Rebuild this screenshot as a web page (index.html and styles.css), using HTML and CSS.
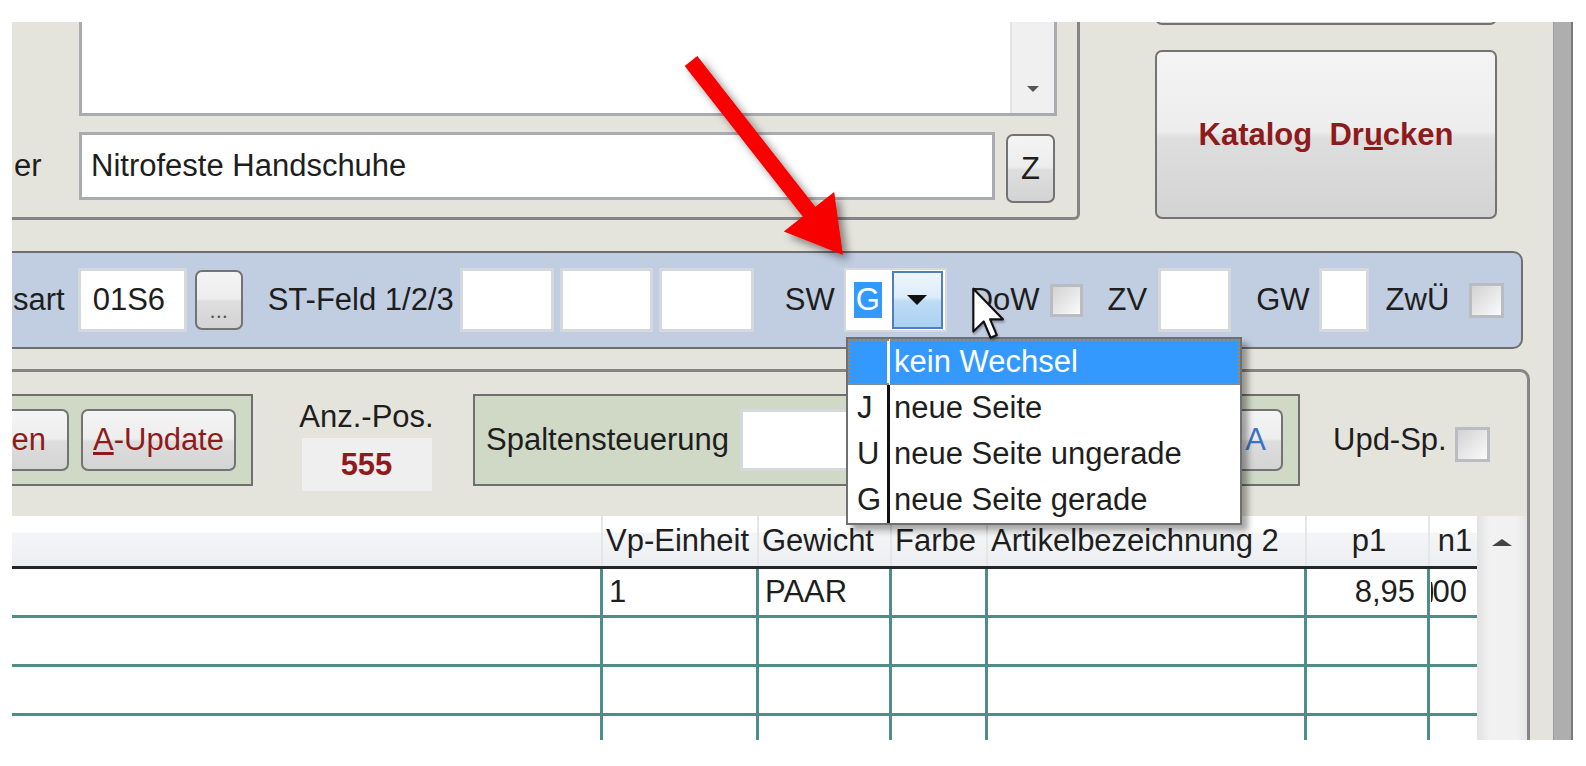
FILE: index.html
```html
<!DOCTYPE html>
<html lang="de">
  <head>
    <meta charset="UTF-8" />
    <title>Katalog</title>
    <link rel="stylesheet" href="styles.css">
  </head>
  <body>
    <div class="screen">
      <div class="main">
        <!-- Kopfbereich: Memo, Bezeichnung, Druckknopf -->
        <div class="top">
          <div class="group-top">
            <div class="memo">
              <div class="memo-scroll"><span class="tri-small"></span></div>
            </div>
            <div class="name-row">
              <span class="lbl lbl-er">er</span>
              <div class="textbox name-box">Nitrofeste Handschuhe</div>
              <button class="btn btn-z">Z</button>
            </div>
          </div>
          <div class="side">
            <div class="btn btn-cut"></div>
            <button class="btn btn-print">Katalog  Dr<u>u</u>cken</button>
          </div>
        </div>

        <!-- Blaue Leiste -->
        <div class="toolbar">
          <span class="lbl lbl-sart">sart</span>
          <div class="field f-art">01S6</div>
          <button class="btn btn-dots">...</button>
          <span class="lbl lbl-st">ST-Feld 1/2/3</span>
          <div class="field f-st1"></div>
          <div class="field f-st2"></div>
          <div class="field f-st3"></div>
          <span class="lbl lbl-sw">SW</span>
          <div class="combo">
            <span class="combo-sel">G</span>
            <span class="combo-btn"><span class="tri-down"></span></span>
          </div>
          <span class="lbl lbl-dow">DoW</span>
          <span class="check check-dow"></span>
          <span class="lbl lbl-zv">ZV</span>
          <div class="field f-zv"></div>
          <span class="lbl lbl-gw">GW</span>
          <div class="field f-gw"></div>
          <span class="lbl lbl-zwu">ZwÜ</span>
          <span class="check check-zwu"></span>
        </div>

        <!-- Unterer Bereich mit Tabelle -->
        <div class="group2">
          <div class="controls">
            <div class="panel-green panel-left">
              <button class="btn btn-en">en</button>
              <button class="btn btn-update"><u>A</u>-Update</button>
            </div>
            <div class="anz">
              <span class="lbl">Anz.-Pos.</span>
              <div class="anz-box">555</div>
            </div>
            <div class="panel-green panel-spalten">
              <span class="lbl">Spaltensteuerung</span>
              <div class="field f-spalten"></div>
              <button class="btn btn-a">A</button>
            </div>
            <div class="upd">
              <span class="lbl">Upd-Sp.</span>
              <span class="check check-upd"></span>
            </div>
          </div>

          <div class="grid">
            <div class="table">
              <div class="row head">
                <div class="cell"></div>
                <div class="cell">Vp-Einheit</div>
                <div class="cell">Gewicht</div>
                <div class="cell">Farbe</div>
                <div class="cell">Artikelbezeichnung 2</div>
                <div class="cell center">p1</div>
                <div class="cell center">n1</div>
              </div>
              <div class="row data">
                <div class="cell"></div>
                <div class="cell">1</div>
                <div class="cell">PAAR</div>
                <div class="cell"></div>
                <div class="cell"></div>
                <div class="cell num">8,95</div>
                <div class="cell num num-n1">00</div>
              </div>
              <div class="row data">
                <div class="cell"></div><div class="cell"></div><div class="cell"></div><div class="cell"></div><div class="cell"></div><div class="cell"></div><div class="cell"></div>
              </div>
              <div class="row data">
                <div class="cell"></div><div class="cell"></div><div class="cell"></div><div class="cell"></div><div class="cell"></div><div class="cell"></div><div class="cell"></div>
              </div>
              <div class="row data">
                <div class="cell"></div><div class="cell"></div><div class="cell"></div><div class="cell"></div><div class="cell"></div><div class="cell"></div><div class="cell"></div>
              </div>
            </div>
            <div class="vscroll"><span class="tri-up"></span></div>
          </div>
        </div>

        <!-- Aufgeklappte Auswahlliste SW -->
        <div class="popup">
          <div class="opt sel"><span class="opt-code"></span><span class="opt-text">kein Wechsel</span></div>
          <div class="opt"><span class="opt-code">J</span><span class="opt-text">neue Seite</span></div>
          <div class="opt"><span class="opt-code">U</span><span class="opt-text">neue Seite ungerade</span></div>
          <div class="opt"><span class="opt-code">G</span><span class="opt-text">neue Seite gerade</span></div>
        </div>

        <!-- roter Pfeil -->
        <svg class="arrow" width="900" height="260" viewBox="0 0 900 260">
          <defs>
            <filter id="shadow" x="-20%" y="-20%" width="150%" height="150%">
              <feDropShadow dx="5" dy="5" stdDeviation="4" flood-color="#000" flood-opacity="0.45" />
            </filter>
          </defs>
          <polygon filter="url(#shadow)" fill="#f80000"
            points="685.3,34.1 803.3,184.8 822.2,169.9 831,233 771.8,209.5 790.7,194.6 672.7,43.9" />
        </svg>

        <!-- Mauszeiger -->
        <svg class="cursor" width="32" height="54" viewBox="0 0 12 20">
          <path d="M0.5 0.5 V16.6 L4.4 12.8 L7 18.9 L9.3 17.9 L6.8 12 H11.6 Z"
            fill="#fff" stroke="#111" stroke-width="0.8" stroke-linejoin="round" />
        </svg>
      </div>
      <div class="edge"><div class="edge-bar"></div></div>
    </div>
  </body>
</html>
```

FILE: styles.css
```css
/* Basic Reset */
* {
  margin: 0;
  padding: 0;
  box-sizing: border-box;
}

body {
  background: #fff;
  font-family: "Liberation Sans", Arial, sans-serif;
  font-size: 31px;
  color: #1e1e1e;
}

/* Window */
.screen {
  margin: 22px 0 0 12px;
  width: 1561px;
  height: 718px;
  display: flex;
  overflow: hidden;
  background: #e5e4dc;
}

.main {
  position: relative;
  width: 1518px;
  flex: none;
}

.edge {
  flex: 1;
  display: flex;
  justify-content: flex-end;
}

.edge-bar {
  width: 20px;
  background: #aeaeae;
  border-left: 1px solid #9c9c9c;
  border-right: 2px solid #7a7a7a;
}

.lbl {
  white-space: nowrap;
  line-height: 36px;
}

/* Buttons */
.btn {
  font: inherit;
  color: #1e1e1e;
  border: 2px solid #737373;
  border-radius: 7px;
  background: linear-gradient(#f4f4f4 0%, #ededed 48%, #dedede 52%, #d3d3d3 100%);
  flex: none;
}

.textbox,
.field {
  background: #fff;
  flex: none;
}

/* Top area */
.top {
  display: flex;
  align-items: flex-start;
  height: 198px;
}

.group-top {
  width: 1068px;
  height: 198px;
  border-right: 3px solid #858585;
  border-bottom: 3px solid #858585;
  border-bottom-right-radius: 6px;
}

.memo {
  margin-left: 67px;
  width: 978px;
  height: 94px;
  background: #fff;
  border: 3px solid #a8acb1;
  border-top: none;
  display: flex;
  justify-content: flex-end;
}

.memo-scroll {
  width: 44px;
  background: #f0f0f0;
  border-left: 2px solid #e3e3e3;
  display: flex;
  align-items: flex-end;
  justify-content: center;
  padding-bottom: 21px;
}

.tri-small {
  border-left: 6px solid transparent;
  border-right: 6px solid transparent;
  border-top: 6px solid #555;
}

.name-row {
  display: flex;
  align-items: center;
  margin-top: 12px;
}

.lbl-er {
  width: 67px;
  padding-left: 2px;
}

.name-box {
  width: 916px;
  height: 68px;
  border: 3px solid #a8acb1;
  padding-left: 9px;
  display: flex;
  align-items: center;
}

.btn-z {
  margin-left: 11px;
  margin-top: 6px;
  width: 49px;
  height: 69px;
}

.side {
  margin-left: 75px;
  width: 342px;
  display: flex;
  flex-direction: column;
}

.btn-cut {
  height: 25px;
  margin-top: -22px;
}

.btn-print {
  margin-top: 25px;
  height: 169px;
  font-weight: bold;
  color: #8e1b1b;
  white-space: pre;
}

/* Blue bar */
.toolbar {
  margin-top: 31px;
  width: 1511px;
  height: 98px;
  background: #c1cde0;
  border: 2px solid #6f6f6f;
  border-left: none;
  border-radius: 0 10px 10px 0;
  display: flex;
  align-items: center;
}

.toolbar .field {
  height: 64px;
  border: 3px solid #d5d9de;
  display: flex;
  align-items: center;
  padding-left: 12px;
}

.lbl-sart { margin-left: 1px; }
.f-art { margin-left: 13px; width: 109px; }
.btn-dots {
  margin-left: 8px;
  width: 48px;
  height: 60px;
  font-size: 22px;
  color: #555;
  padding-top: 22px;
}
.lbl-st { margin-left: 25px; }
.f-st1 { margin-left: 6px; width: 94px; }
.f-st2 { margin-left: 6px; width: 93px; }
.f-st3 { margin-left: 6px; width: 95px; }
.lbl-sw { margin-left: 31px; }

.combo {
  margin-left: 9px;
  width: 103px;
  height: 64px;
  background: #fff;
  border: 2px solid #d5d9de;
  display: flex;
  align-items: center;
  padding-left: 8px;
}

.combo-sel {
  width: 28px;
  height: 36px;
  background: #3399ff;
  color: #fff;
  display: flex;
  align-items: center;
  justify-content: center;
}

.combo-btn {
  margin-left: 10px;
  width: 51px;
  height: 58px;
  border: 2px solid #4f80bd;
  background: linear-gradient(#eef5fc 0%, #dcecfa 45%, #bfdcf5 52%, #aad1f2 100%);
  display: flex;
  align-items: center;
  justify-content: center;
}

.tri-down {
  border-left: 10px solid transparent;
  border-right: 10px solid transparent;
  border-top: 10px solid #111;
}

.check {
  flex: none;
  width: 33px;
  height: 33px;
  border: 3px solid #b9bdc2;
  background: linear-gradient(135deg, #d2d2d2, #fbfbfb);
}

.lbl-dow { margin-left: 24px; }
.check-dow { margin-left: 10px; }
.lbl-zv { margin-left: 25px; }
.f-zv { margin-left: 11px; width: 73px; }
.lbl-gw { margin-left: 25px; }
.f-gw { margin-left: 9px; width: 50px; }
.lbl-zwu { margin-left: 17px; }
.check-zwu { margin-left: 20px; width: 35px; height: 35px; }

/* Lower group */
.group2 {
  margin-top: 20px;
  height: 371px;
  border-top: 3px solid #858585;
  border-right: 3px solid #858585;
  border-top-right-radius: 10px;
}

.controls {
  display: flex;
  align-items: flex-start;
  height: 114px;
  padding-top: 22px;
}

.panel-green {
  height: 92px;
  background: #d0d8c6;
  border: 2px solid #6f6f6f;
  display: flex;
  align-items: center;
  flex: none;
}

.panel-left {
  margin-left: -40px;
  width: 281px;
  padding-left: 18px;
  gap: 12px;
}

.btn-en {
  width: 77px;
  height: 62px;
  text-align: right;
  padding-right: 21px;
  color: #8e1b1b;
}

.btn-update {
  width: 155px;
  height: 62px;
  color: #8e1b1b;
}

.anz {
  margin-left: 43px;
  margin-top: 5px;
  width: 141px;
  display: flex;
  flex-direction: column;
  align-items: center;
}

.anz-box {
  margin-top: 3px;
  width: 130px;
  height: 53px;
  background: #efefef;
  color: #8e1b1b;
  font-weight: bold;
  display: flex;
  align-items: center;
  justify-content: center;
}

.panel-spalten {
  margin-left: 36px;
  width: 827px;
  padding-left: 11px;
}

.f-spalten {
  margin-left: 11px;
  width: 150px;
  height: 62px;
  border: 3px solid #d5d9de;
}

.btn-a {
  margin-left: auto;
  margin-right: 15px;
  width: 55px;
  height: 62px;
  color: #3b73c4;
}

.upd {
  margin-left: 33px;
  align-self: center;
  display: flex;
  align-items: center;
}

.check-upd {
  margin-left: 8px;
  width: 35px;
  height: 35px;
  margin-top: 8px;
}

/* Table */
.grid {
  display: flex;
  margin-top: 30px;
  height: 224px;
}

.table {
  width: 1465px;
  background: #fff;
}

.row {
  display: grid;
  grid-template-columns: 591px 156px 133px 96px 319px 123px 47px;
}

.cell {
  white-space: nowrap;
  overflow: hidden;
}

.head {
  height: 53px;
  border-bottom: 3px solid #262626;
  background: linear-gradient(#fff 0%, #fff 32%, #f4f5f7 34%, #eceef1 100%);
}

.head .cell {
  line-height: 50px;
  padding-left: 3px;
  border-right: 2px solid #e6e6e6;
}

.head .cell:last-child {
  border-right: none;
}

.center {
  text-align: center;
}

.data {
  height: 49px;
  border-bottom: 3px solid #4e8e89;
}

.data .cell {
  line-height: 46px;
  padding-left: 6px;
  border-right: 3px solid #4e8e89;
}

.data .cell:last-child {
  border-right: none;
}

.data .num {
  display: flex;
  justify-content: flex-end;
  padding-left: 0;
  padding-right: 12px;
}

.data .num-n1 {
  padding-right: 10px;
}

/* angeschnittene Ziffer links in n1 */
.num-n1::before {
  content: "";
  align-self: center;
  width: 3px;
  height: 20px;
  margin-right: 0;
  border-right: 2px solid #1e1e1e;
  border-radius: 0 50% 50% 0;
}

.vscroll {
  width: 50px;
  background: linear-gradient(90deg, #e2e2e2, #f1f1f1 25%, #f1f1f1 80%, #e6e6e6);
  display: flex;
  justify-content: center;
  padding-top: 23px;
}

.tri-up {
  border-left: 10px solid transparent;
  border-right: 10px solid transparent;
  border-bottom: 7px solid #444;
  height: 0;
}

/* Dropdown list */
.popup {
  position: absolute;
  left: 834px;
  top: 315px;
  width: 396px;
  background: #fff;
  border: 2px solid #707070;
  box-shadow: 6px 6px 6px rgba(0, 0, 0, 0.35);
}

.opt {
  display: flex;
  height: 46px;
  color: #1e1e1e;
}

.opt-code {
  width: 42px;
  padding-left: 9px;
  display: flex;
  align-items: center;
  border-right: 3px solid #111;
}

.opt-text {
  padding-left: 4px;
  display: flex;
  align-items: center;
  white-space: nowrap;
}

.opt.sel {
  background: #3399ff;
  color: #fff;
  outline: 2px dotted #c0813c;
  outline-offset: -2px;
}

.opt.sel .opt-code {
  border-right-color: #fff;
}

/* Overlays */
.arrow {
  position: absolute;
  left: 0;
  top: 0;
  overflow: visible;
  pointer-events: none;
}

.cursor {
  position: absolute;
  left: 960px;
  top: 265px;
  filter: drop-shadow(1px 2px 1px rgba(0, 0, 0, 0.3));
}
```
